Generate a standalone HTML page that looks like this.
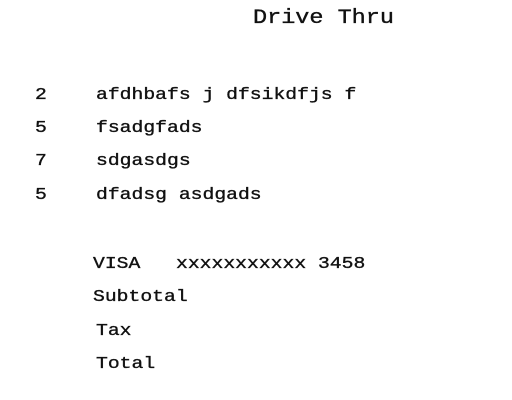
<!DOCTYPE html>
<html><head><style>
html,body{margin:0;padding:0;background:#fff;width:512px;height:400px;overflow:hidden}
svg text{font-family:"Liberation Mono","Courier New",monospace;fill:#111;stroke:#111;stroke-width:0.35px}
.t{font-size:20px}
.r{font-size:17px}
</style></head><body>
<svg width="512" height="400" xmlns="http://www.w3.org/2000/svg">
<text class="t" transform="translate(253,23) scale(1.175,1)">Drive Thru</text>
<text class="r" transform="translate(35,99) scale(1.16,1)">2</text><text class="r" transform="translate(96,99) scale(1.16,1)">afdhbafs j dfsikdfjs f</text>
<text class="r" transform="translate(35,132) scale(1.16,1)">5</text><text class="r" transform="translate(96,132) scale(1.16,1)">fsadgfads</text>
<text class="r" transform="translate(35,165) scale(1.16,1)">7</text><text class="r" transform="translate(96,165) scale(1.16,1)">sdgasdgs</text>
<text class="r" transform="translate(35,199) scale(1.16,1)">5</text><text class="r" transform="translate(96,199) scale(1.16,1)">dfadsg asdgads</text>
<text class="r" transform="translate(93,268) scale(1.16,1)">VISA</text><text class="r" transform="translate(176,268) scale(1.16,1)">xxxxxxxxxxx 3458</text>
<text class="r" transform="translate(93,301) scale(1.16,1)">Subtotal</text>
<text class="r" transform="translate(96,335) scale(1.16,1)">Tax</text>
<text class="r" transform="translate(96,368) scale(1.16,1)">Total</text>
</svg>
</body></html>
